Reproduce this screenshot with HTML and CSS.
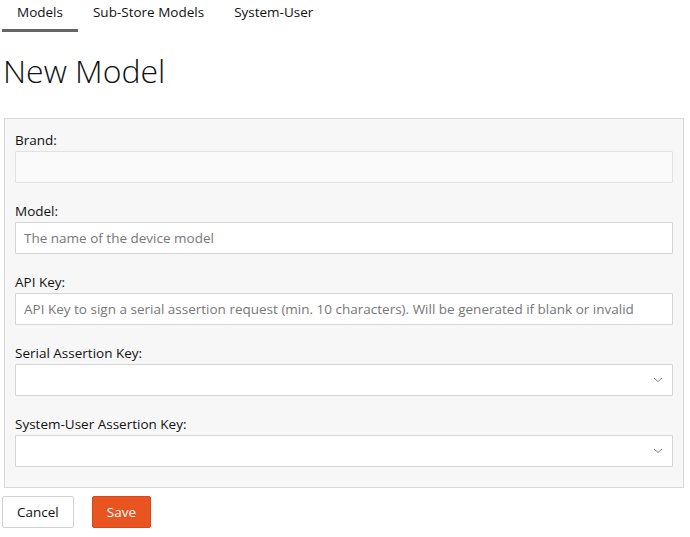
FILE: index.html
```html
<!DOCTYPE html>
<html lang="en">
<head>
<meta charset="utf-8">
<title>New Model</title>
<link rel="stylesheet" href="styles.css">
</head>
<body>
<nav class="tabs">
  <a class="tab active">Models</a>
  <a class="tab">Sub-Store Models</a>
  <a class="tab">System-User</a>
</nav>
<h1 class="title">New Model</h1>
<form class="panel">
  <div class="field">
    <label class="label">Brand:</label>
    <input class="input disabled" type="text" disabled>
  </div>
  <div class="field">
    <label class="label">Model:</label>
    <input class="input" type="text" placeholder="The name of the device model">
  </div>
  <div class="field">
    <label class="label">API Key:</label>
    <input class="input" type="text" placeholder="API Key to sign a serial assertion request (min. 10 characters). Will be generated if blank or invalid">
  </div>
  <div class="field">
    <label class="label">Serial Assertion Key:</label>
    <div class="select">
      <svg class="chev" width="10" height="6" viewBox="0 0 10 6"><path d="M1 1 L5 4.5 L9 1" fill="none" stroke="#8a8a8a" stroke-width="1"/></svg>
    </div>
  </div>
  <div class="field">
    <label class="label">System-User Assertion Key:</label>
    <div class="select">
      <svg class="chev" width="10" height="6" viewBox="0 0 10 6"><path d="M1 1 L5 4.5 L9 1" fill="none" stroke="#8a8a8a" stroke-width="1"/></svg>
    </div>
  </div>
</form>
<div class="actions">
  <button class="btn" type="button">Cancel</button>
  <button class="btn primary" type="button">Save</button>
</div>
</body>
</html>
```
FILE: styles.css
```css
* { box-sizing: border-box; }
body {
  margin: 0;
  padding: 0 6px 0 2px;
  font-family: "Open Sans", "Noto Sans", sans-serif;
  font-size: 13.5px;
  color: #111;
  background: #fff;
}
.tabs {
  display: flex;
  height: 32px;
}
.tab {
  padding: 2px 15px 7px;
  line-height: 20px;
  font-size: 13.5px;
  color: #111;
  border-bottom: 3px solid transparent;
}
.tab.active { border-bottom-color: #666; }
.title {
  margin: 17px 0 26px 1px;
  font-size: 32px;
  font-weight: 300;
  line-height: 43px;
  color: #111;
}
.panel {
  margin: 0 0 0 2px;
  padding: 11px 10px 20px;
  background: #f7f7f7;
  border: 1px solid #d9d9d9;
  display: flex;
  flex-direction: column;
  gap: 18px;
}
.field { display: flex; flex-direction: column; }
.label {
  line-height: 20px;
  margin-bottom: 1px;
  color: #111;
}
.input, .select {
  height: 32px;
  width: 100%;
  border: 1px solid #d4d4d4;
  border-radius: 1px;
  background: #fff;
  font-family: inherit;
  font-size: 13.5px;
  padding: 0 8px;
  color: #111;
  outline: none;
}
.input::placeholder { color: #777; }
.input.disabled {
  background: #fafafa;
  border-color: #e2e2e2;
}
.select {
  display: flex;
  align-items: center;
  justify-content: flex-end;
  padding-right: 9px;
}
.actions {
  display: flex;
  gap: 18px;
  margin-top: 8px;
}
.btn {
  height: 32px;
  padding: 0 14px;
  font-family: inherit;
  font-size: 13.5px;
  color: #111;
  background: #fff;
  border: 1px solid #d2d2d2;
  border-radius: 2px;
}
.btn.primary {
  background: #e95420;
  border-color: #d9481a;
  color: #fff;
}
```
